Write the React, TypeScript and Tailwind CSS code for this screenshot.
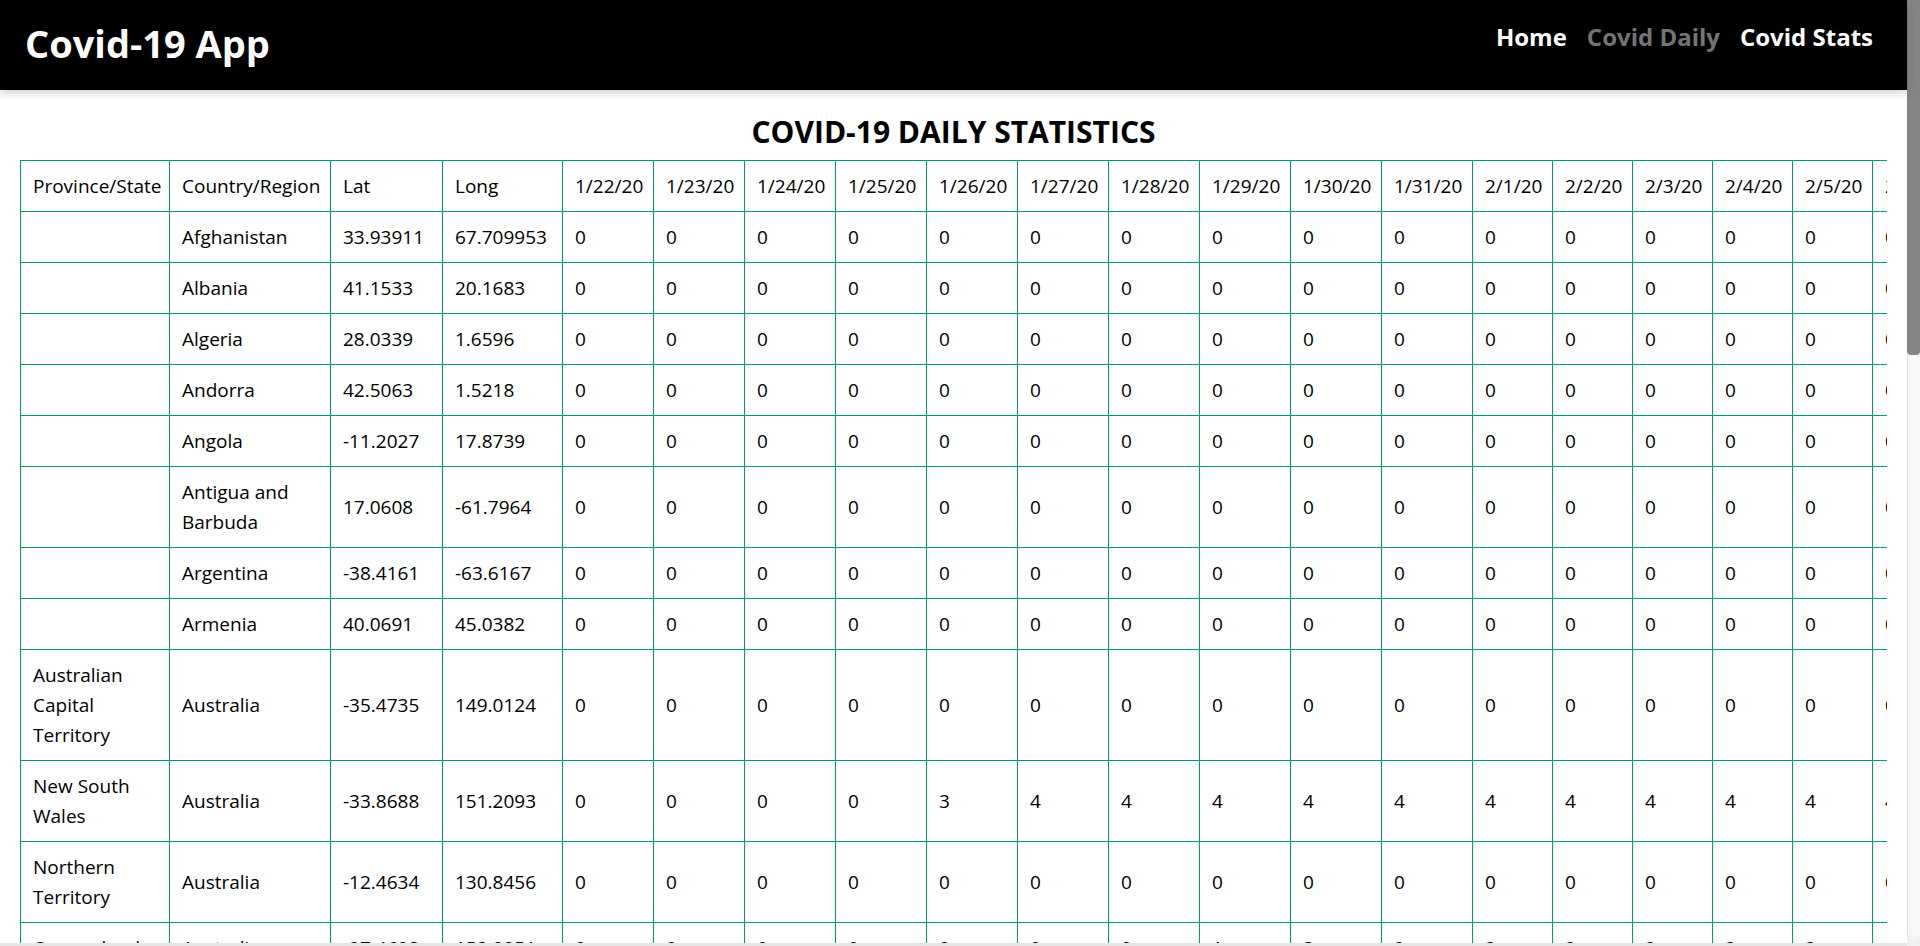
const dates = [
  "1/22/20", "1/23/20", "1/24/20", "1/25/20", "1/26/20", "1/27/20", "1/28/20",
  "1/29/20", "1/30/20", "1/31/20", "2/1/20", "2/2/20", "2/3/20", "2/4/20",
  "2/5/20", "2/6/20", "2/7/20", "2/8/20",
];

const zeros = dates.map(() => 0);

const rows = [
  { state: "", country: "Afghanistan", lat: "33.93911", long: "67.709953", values: zeros },
  { state: "", country: "Albania", lat: "41.1533", long: "20.1683", values: zeros },
  { state: "", country: "Algeria", lat: "28.0339", long: "1.6596", values: zeros },
  { state: "", country: "Andorra", lat: "42.5063", long: "1.5218", values: zeros },
  { state: "", country: "Angola", lat: "-11.2027", long: "17.8739", values: zeros },
  { state: "", country: "Antigua and Barbuda", lat: "17.0608", long: "-61.7964", values: zeros },
  { state: "", country: "Argentina", lat: "-38.4161", long: "-63.6167", values: zeros },
  { state: "", country: "Armenia", lat: "40.0691", long: "45.0382", values: zeros },
  { state: "Australian Capital Territory", country: "Australia", lat: "-35.4735", long: "149.0124", values: zeros },
  {
    state: "New South Wales",
    country: "Australia",
    lat: "-33.8688",
    long: "151.2093",
    values: [0, 0, 0, 0, 3, 4, 4, 4, 4, 4, 4, 4, 4, 4, 4, 4, 4, 4],
  },
  { state: "Northern Territory", country: "Australia", lat: "-12.4634", long: "130.8456", values: zeros },
  {
    state: "Queensland",
    country: "Australia",
    lat: "-27.4698",
    long: "153.0251",
    values: [0, 0, 0, 0, 0, 0, 0, 1, 3, 2, 3, 2, 2, 3, 3, 4, 5, 5],
  },
];

const cell = "border border-[#009879] px-3 py-[10px] text-left align-middle font-normal";

const App = () => {
  return (
    <div className="flex h-[946px] w-[1920px] overflow-hidden bg-white font-['Open_Sans',sans-serif] text-black">
      <div className="flex w-[1907px] min-w-0 flex-col">
        <header className="relative z-10 flex h-[90px] shrink-0 justify-between bg-black shadow-[0_3px_8px_rgba(0,0,0,0.18)]">
          <h1 className="mt-[24px] pl-[25px] text-[38px] font-bold leading-[38px] text-white">
            Covid-19 App
          </h1>
          <nav className="mt-[25px] flex gap-5 pr-[34px] text-[24px] font-bold leading-[24px]">
            <a href="#" className="text-white">Home</a>
            <a href="#" className="text-[#747474]">Covid Daily</a>
            <a href="#" className="text-white">Covid Stats</a>
          </nav>
        </header>

        <main className="flex min-h-0 flex-1 flex-col overflow-hidden">
          <h2 className="mt-[27px] mb-[13px] text-center text-[30px] font-bold leading-[30px]">
            COVID-19 DAILY STATISTICS
          </h2>
          <div className="mx-5 overflow-hidden">
            <table className="w-[2092px] table-fixed border-collapse text-[19px] leading-[30px]">
              <colgroup>
                <col className="w-[149px]" />
                <col className="w-[161px]" />
                <col className="w-[112px]" />
                <col className="w-[120px]" />
                {dates.map((d) => (
                  <col key={d} className={d.startsWith("1/") ? "w-[91px]" : "w-[80px]"} />
                ))}
              </colgroup>
              <thead>
                <tr>
                  <th className={cell + " whitespace-nowrap"}>Province/State</th>
                  <th className={cell + " whitespace-nowrap"}>Country/Region</th>
                  <th className={cell}>Lat</th>
                  <th className={cell}>Long</th>
                  {dates.map((d) => (
                    <th key={d} className={cell + " whitespace-nowrap"}>{d}</th>
                  ))}
                </tr>
              </thead>
              <tbody>
                {rows.map((r) => (
                  <tr key={r.state + r.country}>
                    <td className={cell}>{r.state}</td>
                    <td className={cell}>{r.country}</td>
                    <td className={cell}>{r.lat}</td>
                    <td className={cell}>{r.long}</td>
                    {r.values.map((v, i) => (
                      <td key={i} className={cell}>{v}</td>
                    ))}
                  </tr>
                ))}
              </tbody>
            </table>
          </div>
        </main>

        <div className="h-[3px] shrink-0 bg-[#e6e6e6]" />
      </div>

      {/* page scrollbar */}
      <div className="flex w-[13px] shrink-0 flex-col bg-[#f1f1f1] pb-[6px]">
        <div className="h-[355px] rounded-b-[4px] bg-[#858585]" />
        <div className="flex-1 rounded-b-[6px] border-l border-[#dcdcdc] bg-[#f7f7f7]" />
      </div>
    </div>
  );
};

export default App;
